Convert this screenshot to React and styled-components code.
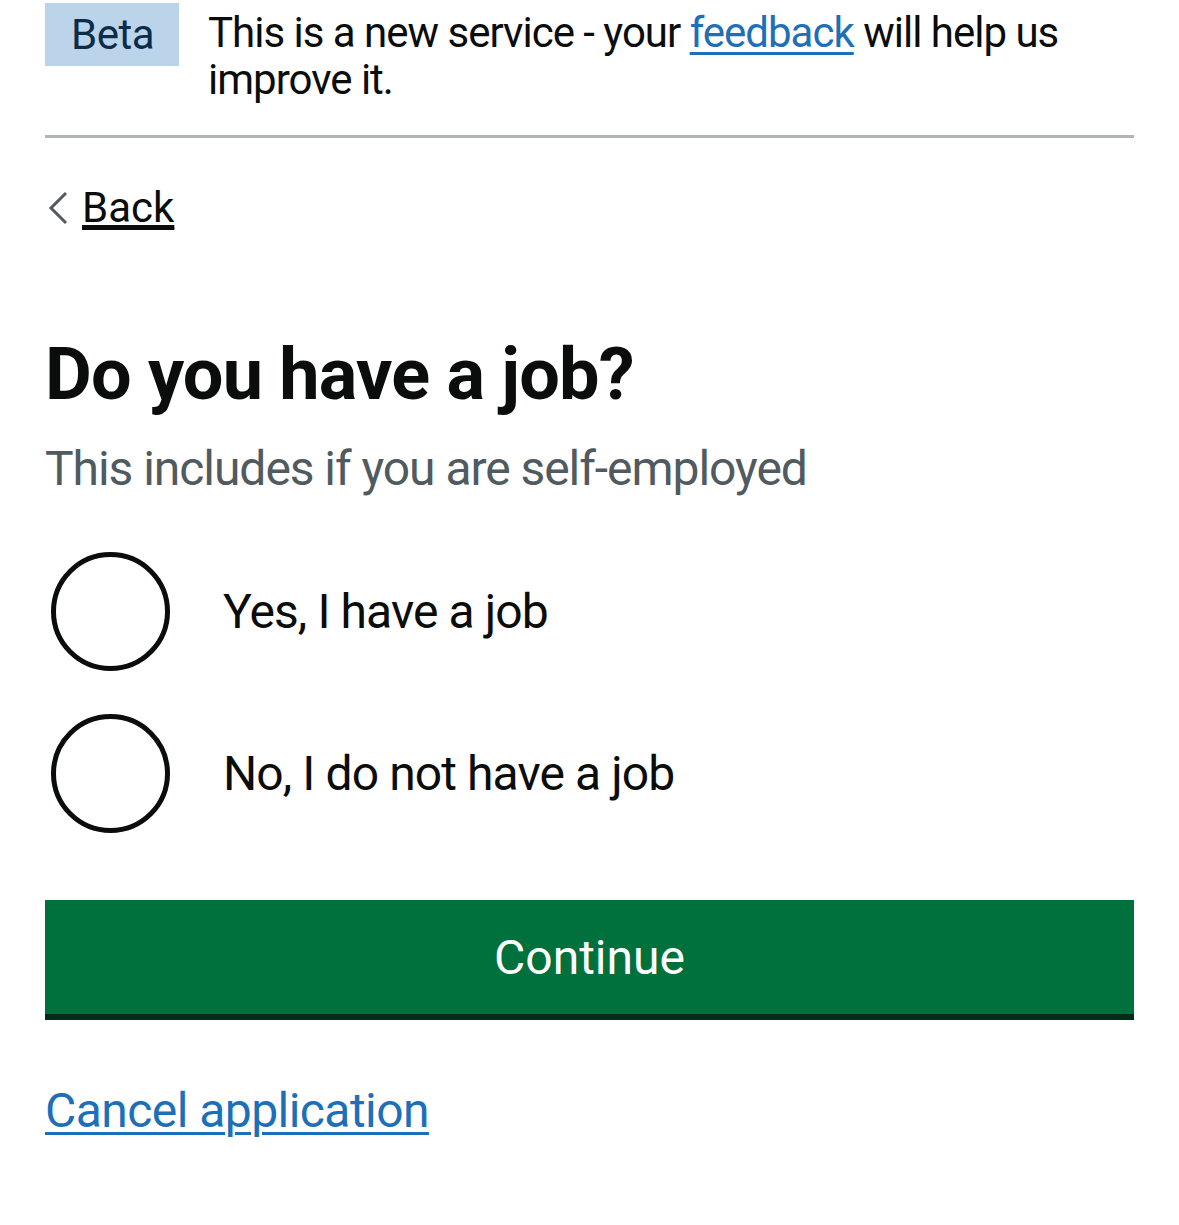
import React from 'react'
import styled, { createGlobalStyle } from 'styled-components'

const GlobalStyle = createGlobalStyle`
  body {
    margin: 0;
    background: #ffffff;
    color: #0b0c0c;
    font-family: Roboto, "Noto Sans", "Liberation Sans", sans-serif;
  }
`

function Radio({ label }) {
  return (
    <RadioItem>
      <RadioCircle />
      <RadioLabel>{label}</RadioLabel>
    </RadioItem>
  )
}

export default function App() {
  return (
    <Page>
      <GlobalStyle />
      <PhaseBanner>
        <Tag>Beta</Tag>
        <BannerText>
          This is a new service - your <Link href="#">feedback</Link> will help us improve it.
        </BannerText>
      </PhaseBanner>

      <BackLink href="#">
        <Chevron width="22" height="34" viewBox="0 0 22 34">
          <polyline points="19,2 4,17 19,32" fill="none" stroke="#505a5f" strokeWidth="3" />
        </Chevron>
        <span>Back</span>
      </BackLink>

      <Heading>Do you have a job?</Heading>
      <Hint>This includes if you are self-employed</Hint>

      <Radios>
        <Radio label="Yes, I have a job" />
        <Radio label="No, I do not have a job" />
      </Radios>

      <Button>Continue</Button>

      <CancelLink href="#">Cancel application</CancelLink>
    </Page>
  )
}

const Page = styled.div`
  padding: 0 45px;
`

const PhaseBanner = styled.div`
  display: flex;
  align-items: flex-start;
  padding-top: 3px;
  padding-bottom: 32px;
  border-bottom: 3px solid #b1b4b6;
`

const Tag = styled.strong`
  display: flex;
  align-items: center;
  flex-shrink: 0;
  height: 63px;
  padding: 0 25px 0 26px;
  background: #bbd4ea;
  color: #0c2d4a;
  font-weight: 400;
  font-size: 42px;
  letter-spacing: -0.5px;
`

const BannerText = styled.p`
  margin: 6px 0 0 29px;
  font-size: 42px;
  line-height: 47px;
  letter-spacing: -1px;
`

const Link = styled.a`
  color: #1d70b8;
  text-decoration: underline;
  text-decoration-thickness: 3px;
  text-underline-offset: 5px;
`

const BackLink = styled.a`
  display: inline-flex;
  align-items: center;
  margin-top: 45px;
  color: #0b0c0c;
  font-size: 42px;
  line-height: 50px;
  span {
    margin-left: 13px;
    text-decoration: underline;
    text-decoration-thickness: 3px;
    text-underline-offset: 5px;
  }
`

const Chevron = styled.svg`
  display: block;
  margin-left: 2px;
`

const Heading = styled.h1`
  margin: 104px 0 0;
  font-size: 72px;
  line-height: 75px;
  font-weight: 700;
  letter-spacing: -0.8px;
`

const Hint = styled.div`
  margin-top: 27px;
  color: #505a5f;
  font-size: 48px;
  line-height: 60px;
  letter-spacing: -1.05px;
`

const Radios = styled.div`
  display: flex;
  flex-direction: column;
  gap: 43px;
  margin-top: 53px;
`

const RadioItem = styled.div`
  display: flex;
  align-items: center;
`

const RadioCircle = styled.span`
  box-sizing: border-box;
  width: 119px;
  height: 119px;
  margin-left: 6px;
  border: 5px solid #0b0c0c;
  border-radius: 50%;
  flex-shrink: 0;
`

const RadioLabel = styled.label`
  margin-left: 53px;
  font-size: 48px;
  line-height: 60px;
  letter-spacing: -0.9px;
`

const Button = styled.button`
  display: flex;
  align-items: center;
  justify-content: center;
  width: 100%;
  height: 114px;
  margin-top: 67px;
  border: 0;
  background: #00703c;
  box-shadow: 0 6px 0 #002d18;
  color: #ffffff;
  font-family: inherit;
  font-size: 48px;
`

const CancelLink = styled(Link)`
  display: inline-block;
  margin-top: 67px;
  font-size: 48px;
  line-height: 60px;
  letter-spacing: -0.55px;
`
